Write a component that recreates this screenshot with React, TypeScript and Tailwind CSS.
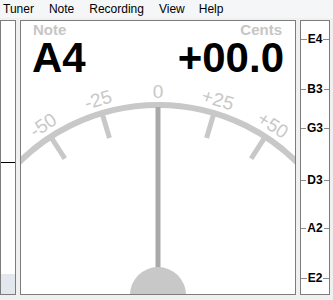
import React from "react";

const CX = 158;
const CY = 302;

function pt(r: number, deg: number) {
  const a = (deg * Math.PI) / 180;
  return { x: CX + r * Math.sin(a), y: CY - r * Math.cos(a) };
}

const ticks = [
  { deg: -33, label: "-50" },
  { deg: -16.5, label: "-25" },
  { deg: 0, label: "0" },
  { deg: 16.5, label: "+25" },
  { deg: 33, label: "+50" },
];

function Gauge() {
  const a0 = pt(197, -50);
  const a1 = pt(197, 50);
  return (
    <svg className="absolute left-0 top-0" width={274} height={273}>
      <g transform="translate(-21,-21)">
        <path
          d={`M ${a0.x} ${a0.y} A 197 197 0 0 1 ${a1.x} ${a1.y}`}
          stroke="#c8c8c8"
          strokeWidth={6}
          fill="none"
        />
        {ticks.map((t) => {
          const p1 = pt(195, t.deg);
          const p2 = pt(171, t.deg);
          const l = pt(211, t.deg);
          return (
            <g key={t.label}>
              {t.deg !== 0 && (
                <line x1={p1.x} y1={p1.y} x2={p2.x} y2={p2.y} stroke="#c8c8c8" strokeWidth={5} />
              )}
              <text
                x={l.x}
                y={l.y}
                transform={`rotate(${t.deg} ${l.x} ${l.y})`}
                textAnchor="middle"
                dominantBaseline="central"
                fill="#c8c8c8"
                fontSize={19}
                fontFamily="'Liberation Sans', Arial, sans-serif"
              >
                {t.label}
              </text>
            </g>
          );
        })}
        <line x1={158} y1={107} x2={158} y2={280} stroke="#a9a9a9" strokeWidth={5} />
        <circle cx={158} cy={295} r={28} fill="#c8c8c8" />
      </g>
    </svg>
  );
}

const notes = [
  { n: "E4", y: 18 },
  { n: "B3", y: 68 },
  { n: "G3", y: 107 },
  { n: "D3", y: 159 },
  { n: "A2", y: 207 },
  { n: "E2", y: 257 },
];

export default function App() {
  return (
    <div
      className="w-[333px] h-[300px] bg-[#f0f0f0] flex flex-col overflow-hidden"
      style={{ fontFamily: "'Liberation Sans', Arial, sans-serif" }}
    >
      <div className="h-[18px] flex items-center text-[12px] text-black bg-[#f5f6f7]">
        <span className="pl-[3px] pr-[15px]">Tuner</span>
        <span className="pr-[15px]">Note</span>
        <span className="pr-[15px]">Recording</span>
        <span className="pr-[14px]">View</span>
        <span>Help</span>
      </div>
      <div className="flex gap-[4px] pt-[2px] h-[277px]">
        <div className="relative w-[16px] h-full border border-[#7c7c7c] bg-white">
          <div className="absolute left-0 right-0 top-[141px] h-px bg-black" />
          <div className="absolute left-0 right-0 bottom-0 h-[20px] bg-[#e3e8ef]" />
        </div>
        <div className="relative w-[276px] h-full border border-[#7c7c7c] bg-white overflow-hidden">
          <Gauge />
          <div className="relative flex justify-between px-[11px] pt-[1px]">
            <div className="flex flex-col items-start">
              <span className="text-[15px] font-bold text-[#c6c6c6] leading-[16px] pl-[1px]">Note</span>
              <span className="text-[42px] font-bold text-black leading-[34px] mt-[3px]">A4</span>
            </div>
            <div className="flex flex-col items-end">
              <span className="text-[15px] font-bold text-[#c6c6c6] leading-[16px] mr-[2px]">Cents</span>
              <span className="text-[42px] font-bold text-black leading-[34px] mt-[3px]">+00.0</span>
            </div>
          </div>
        </div>
        <div className="relative w-[30px] h-full border border-[#7c7c7c] bg-white">
          {notes.map((x) => (
            <div
              key={x.n}
              className="absolute left-0 right-0 flex items-center h-[14px]"
              style={{ top: x.y - 7 }}
            >
              <div className="flex-1 h-px bg-[#8a8a8a]" />
              <span className="text-[12px] font-bold text-black leading-[14px] px-[1px]">{x.n}</span>
              <div className="flex-1 h-px bg-[#8a8a8a]" />
            </div>
          ))}
        </div>
      </div>
    </div>
  );
}
